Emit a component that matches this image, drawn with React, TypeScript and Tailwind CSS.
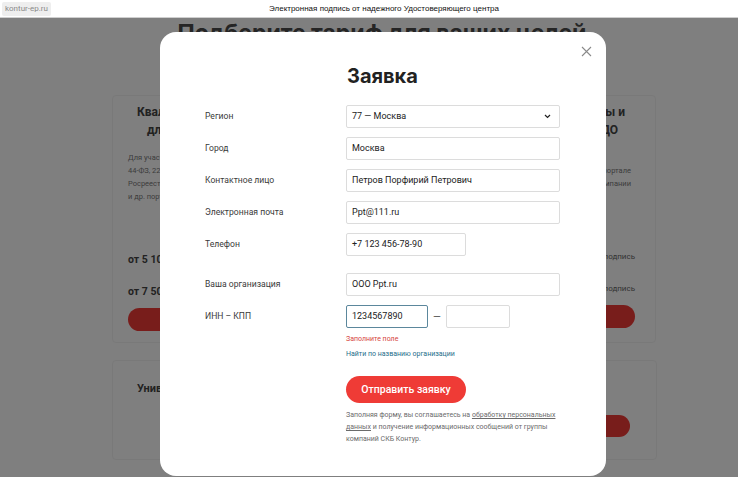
import React from "react";

function Field({ label, children, className = "" }: { label: string; children: React.ReactNode; className?: string }) {
  return (
    <div className={`grid grid-cols-[141px_1fr] items-center ${className}`}>
      <div className="text-[8.6px] text-[#3a3a3a]">{label}</div>
      <div className="flex items-center">{children}</div>
    </div>
  );
}

function Input({ value, w = "w-[214px]" }: { value: string; w?: string }) {
  return (
    <div className={`${w} h-[23px] border border-[#dcdcdc] rounded-[2px] bg-white flex items-center px-[5px] text-[9px] text-[#222]`}>
      {value}
    </div>
  );
}

export default function App() {
  return (
    <div className="relative w-[738px] h-[477px] overflow-hidden bg-white" style={{ fontFamily: "Roboto, 'Noto Sans', sans-serif" }}>
      {/* top bar */}
      <div className="relative h-[18px] bg-white border-b border-[#cfcfcf] flex items-center">
        <div className="ml-[2px] h-[14px] px-[3px] bg-[#eeeeee] rounded-[2px] flex items-center text-[8px] text-[#8a8a8a]">kontur-ep.ru</div>
        <div className="absolute left-0 right-0 top-0 h-[18px] flex items-center justify-center text-[8px] text-[#111] pl-[30px]" style={{ fontFamily: "'Liberation Sans', Arial, sans-serif" }}>
          Электронная подпись от надежного Удостоверяющего центра
        </div>
      </div>

      {/* background page */}
      <div className="bg-white">
        <div className="text-center text-[23px] font-bold leading-[30px] text-[#4a4a4a] pl-[26px] whitespace-nowrap" style={{ fontFamily: "Inter, sans-serif" }}>
          Подберите тариф для ваших целей
        </div>
        <div className="ml-[112px] mt-[47px] flex gap-[14px]">
          <div className="w-[172px] h-[248px] bg-white border border-[#f2f2f2] rounded-[4px] flex">
            <div className="w-[48px] overflow-hidden flex flex-col pt-[7px] whitespace-nowrap">
              <div className="text-[12px] font-bold leading-[18px] text-[#444]">
                <div className="pl-[24px]">Квалифицированная</div>
                <div className="pl-[34px]">для торгов</div>
              </div>
              <div className="mt-[12px] pl-[15px] text-[7.5px] leading-[13px] text-[#7a7a7a]">
                <div>Для участия в торгах</div>
                <div>44-ФЗ, 223-ФЗ и работы</div>
                <div>Росреестр, налоговая</div>
                <div>и др. порталы</div>
              </div>
              <div className="mt-[50px] pl-[15px] text-[10.5px] font-bold leading-[14px] text-[#444]">от 5 100 ₽</div>
              <div className="mt-[18px] pl-[15px] text-[10.5px] font-bold leading-[14px] text-[#444]">от 7 500 ₽</div>
              <div className="mt-[9px] ml-[15px] w-[120px] h-[23px] rounded-full bg-[#f03a36]" />
            </div>
          </div>
          <div className="w-[172px] h-[248px] bg-white border border-[#f2f2f2] rounded-[4px]" />
          <div className="w-[172px] h-[248px] bg-white border border-[#f2f2f2] rounded-[4px] flex justify-end">
            <div className="w-[51px] overflow-hidden flex flex-col items-end pt-[7px] whitespace-nowrap">
              <div className="text-[12px] font-bold leading-[18px] text-[#444] flex flex-col items-end">
                <div className="pr-[30px]">Госпорталы и</div>
                <div className="pr-[37px]">ЭДО</div>
              </div>
              <div className="mt-[25px] pr-[24px] text-[7.5px] leading-[13px] text-[#7a7a7a] flex flex-col items-end">
                <div>для работы на портале</div>
                <div>и в ЭДО компании</div>
              </div>
              <div className="mt-[60px] pr-[20px] text-[8px] leading-[14px] text-[#666]">за подпись</div>
              <div className="mt-[18px] pr-[20px] text-[8px] leading-[14px] text-[#666]">за подпись</div>
              <div className="mt-[9px] mr-[20px] w-[120px] h-[23px] rounded-full bg-[#f03a36]" />
            </div>
          </div>
        </div>
        <div className="ml-[112px] mt-[17px] flex gap-[14px]">
          <div className="w-[265px] h-[100px] bg-white border border-[#f2f2f2] rounded-[4px] flex">
            <div className="w-[48px] overflow-hidden whitespace-nowrap pt-[20px] pl-[24px] text-[11px] font-bold text-[#444]">Универсальная подпись</div>
          </div>
          <div className="w-[266px] h-[100px] bg-white border border-[#f2f2f2] rounded-[4px] flex items-end justify-end pb-[22px] pr-[26px]">
            <div className="w-[90px] h-[22px] rounded-full bg-[#f03a36]" />
          </div>
        </div>
      </div>

      {/* dimming overlay */}
      <div className="absolute left-0 right-0 top-[18px] bottom-0 bg-black/50" />

      {/* modal */}
      <div className="absolute left-[160px] top-[32px] w-[446px] h-[444px] bg-white rounded-[16px] px-[45px] pt-[32px]">
        <button className="absolute right-[13px] top-[12px] w-[14px] h-[14px] flex items-center justify-center">
          <svg width="11" height="11" viewBox="0 0 11 11" fill="none" stroke="#8a8a8a" strokeWidth="1.1">
            <path d="M1 1L10 10M10 1L1 10" />
          </svg>
        </button>

        <div className="ml-[142px] text-[20px] font-bold leading-[24px] text-[#222]" style={{ fontFamily: "Inter, sans-serif" }}>
          Заявка
        </div>

        <div className="mt-[17px] flex flex-col">
          <Field label="Регион">
            <div className="w-[214px] h-[23px] border border-[#dcdcdc] rounded-[2px] bg-white flex items-center justify-between px-[5px] text-[9px] text-[#222]">
              <span>77 — Москва</span>
              <svg width="7" height="5" viewBox="0 0 7 5" fill="none" stroke="#222" strokeWidth="1.2" className="mr-[3px]">
                <path d="M1 1L3.5 3.5L6 1" />
              </svg>
            </div>
          </Field>
          <Field label="Город" className="mt-[9px]">
            <Input value="Москва" />
          </Field>
          <Field label="Контактное лицо" className="mt-[9px]">
            <Input value="Петров Порфирий Петрович" />
          </Field>
          <Field label="Электронная почта" className="mt-[9px]">
            <Input value="Ppt@111.ru" />
          </Field>
          <Field label="Телефон" className="mt-[9px]">
            <Input value="+7 123 456-78-90" w="w-[120px]" />
          </Field>
          <Field label="Ваша организация" className="mt-[17px]">
            <Input value="ООО Ppt.ru" />
          </Field>
          <Field label="ИНН – КПП" className="mt-[9px]">
            <div className="w-[82px] h-[23px] border-[1.5px] border-[#5b879c] rounded-[2px] bg-white flex items-center px-[5px] text-[9px] text-[#222]">
              1234567890
            </div>
            <div className="w-[18px] text-center text-[10px] text-[#555]">—</div>
            <div className="w-[64px] h-[23px] border border-[#dcdcdc] rounded-[2px] bg-white" />
          </Field>
        </div>

        <div className="ml-[141px]">
          <div className="mt-[6px] text-[7px] leading-[10px] text-[#d6453d]">Заполните поле</div>
          <div className="mt-[5px] text-[7px] leading-[10px] text-[#1e6e8a]">Найти по названию организации</div>
          <button className="mt-[17px] w-[120px] h-[27px] rounded-full bg-[#ef3b36] text-white text-[10.5px] font-medium flex items-center justify-center">
            Отправить заявку
          </button>
          <div className="mt-[6px] text-[7px] leading-[12px] text-[#6b6b6b]">
            Заполняя форму, вы соглашаетесь на <span className="underline">обработку персональных</span>
            <br />
            <span className="underline">данных</span> и получение информационных сообщений от группы
            <br />
            компаний СКБ Контур.
          </div>
        </div>
      </div>
    </div>
  );
}
